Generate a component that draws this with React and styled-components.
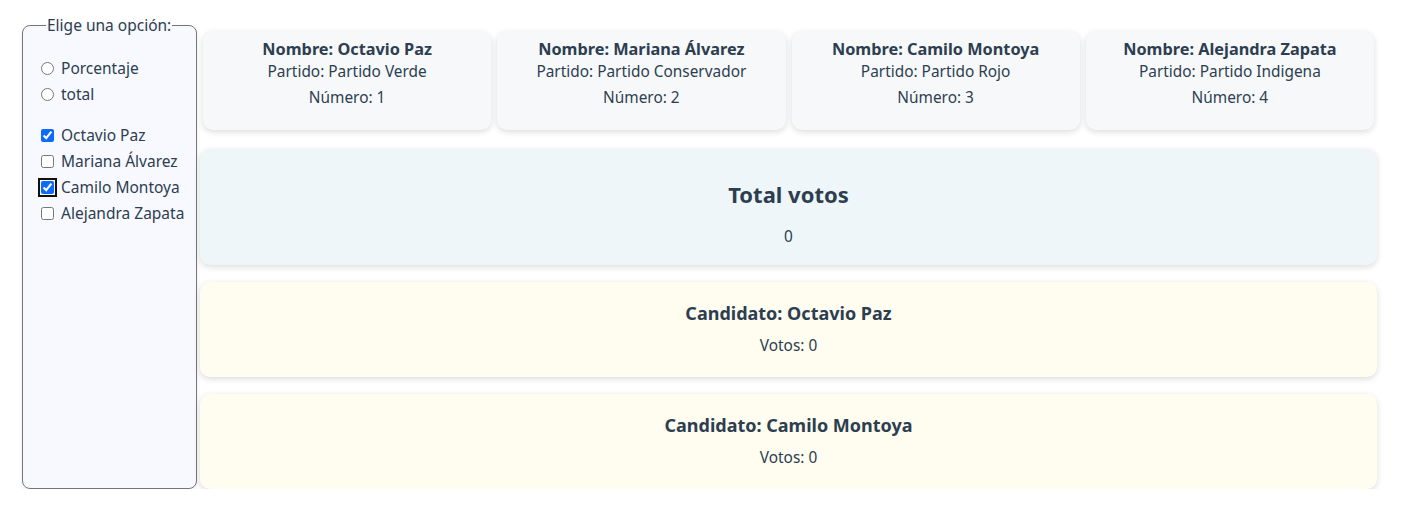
import React from "react";
import styled, { createGlobalStyle } from "styled-components";

const textColor = '#2c3e50';

const GlobalStyle = createGlobalStyle`
  body {
    margin: 0;
    background: #ffffff;
    font-family: "Noto Sans", "Open Sans", sans-serif;
    color: ${textColor};
    -webkit-font-smoothing: antialiased;
  }
`;

const Layout = styled.div`
  display: flex;
  align-items: stretch;
  padding: 17px 0 0 22px;
  width: 1355px;
`;

const Sidebar = styled.fieldset`
  width: 175px;
  box-sizing: border-box;
  margin: 0 3px 0 0;
  padding: 21px 6px 0 13px;
  border: 1px solid #767676;
  border-radius: 8px;
  background: #f8f8ff;
  box-shadow: 0 2px 5px rgba(0, 0, 0, 0.08);
  font-size: 15.5px;
`;

const Legend = styled.legend`
  margin-left: 10px;
  padding: 0 1px;
  line-height: 17px;
  font-size: 15.5px;
`;

const Group = styled.div`
  display: flex;
  flex-direction: column;
  margin-bottom: 15px;
`;

const Option = styled.label`
  display: flex;
  align-items: center;
  height: 26px;
  gap: 7px;
  white-space: nowrap;
  line-height: 26px;
`;

const Input = styled.input`
  margin: 0 0 0 5px;
  width: 13px;
  height: 13px;
  accent-color: #0b6bff;
  outline: ${p => (p.$focused ? '2px solid #101010' : 'none')};
  outline-offset: 1px;
  border-radius: 2px;
`;

const Main = styled.div`
  flex: 1;
  display: flex;
  flex-direction: column;
  margin-top: 11px;
`;

const CardRow = styled.div`
  display: flex;
`;

const Card = styled.div`
  flex: 1;
  margin: 3px;
  padding: 8px 6px 21px;
  border-radius: 10px;
  background: #f7f8fa;
  box-shadow: 0 2px 6px rgba(0, 0, 0, 0.14);
  text-align: center;
`;

const CardName = styled.h3`
  margin: 0;
  font-size: 16.3px;
  line-height: 20px;
  font-weight: 700;
`;

const CardLine = styled.p`
  margin: ${p => (p.$spaced ? '4px 0 0' : '2px 0 0')};
  font-size: 15.4px;
  line-height: 22px;
`;

const Panel = styled.div`
  margin-top: ${p => p.$top}px;
  padding: ${p => p.$pad};
  border-radius: 10px;
  background: ${p => p.$bg};
  box-shadow: 0 2px 6px rgba(0, 0, 0, 0.14);
  text-align: center;
`;

const TotalTitle = styled.h2`
  margin: 0;
  font-size: 22px;
  line-height: 26px;
  font-weight: 700;
`;

const CandidateTitle = styled.h3`
  margin: 0;
  font-size: 18px;
  line-height: 22px;
  font-weight: 700;
`;

const Value = styled.p`
  margin: ${p => p.$gap}px 0 0;
  font-size: 15.4px;
  line-height: 20px;
`;

const candidates = [
  { id: 1, name: 'Octavio Paz', party: 'Partido Verde', checked: true },
  { id: 2, name: 'Mariana Álvarez', party: 'Partido Conservador', checked: false },
  { id: 3, name: 'Camilo Montoya', party: 'Partido Rojo', checked: true, focused: true },
  { id: 4, name: 'Alejandra Zapata', party: 'Partido Indigena', checked: false },
];

export default function App() {
  return (
    <>
      <GlobalStyle />
      <Layout>
        <Sidebar>
          <Legend>Elige una opción:</Legend>
          <Group>
            <Option><Input type="radio" name="modo" readOnly />Porcentaje</Option>
            <Option><Input type="radio" name="modo" readOnly />total</Option>
          </Group>
          <Group>
            {candidates.map(c => (
              <Option key={c.id}>
                <Input type="checkbox" defaultChecked={c.checked} $focused={c.focused} />
                {c.name}
              </Option>
            ))}
          </Group>
        </Sidebar>
        <Main>
          <CardRow>
            {candidates.map(c => (
              <Card key={c.id}>
                <CardName>Nombre: {c.name}</CardName>
                <CardLine>Partido: {c.party}</CardLine>
                <CardLine $spaced>Número: {c.id}</CardLine>
              </Card>
            ))}
          </CardRow>
          <Panel $top={16} $pad="32px 0 18px" $bg="#eef6f9">
            <TotalTitle>Total votos</TotalTitle>
            <Value $gap={20}>0</Value>
          </Panel>
          {candidates.filter(c => c.checked).map(c => (
            <Panel key={c.id} $top={17} $pad="20px 0 21px" $bg="#fffcf0">
              <CandidateTitle>Candidato: {c.name}</CandidateTitle>
              <Value $gap={12}>Votos: 0</Value>
            </Panel>
          ))}
        </Main>
      </Layout>
    </>
  );
}
